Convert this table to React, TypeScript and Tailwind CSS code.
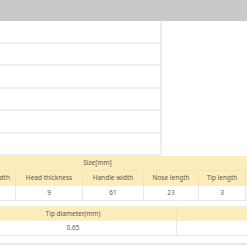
import React from 'react';

const sizeCols = [
  { label: 'Head width', value: '', w: 'w-[46px]' },
  { label: 'Head thickness', value: '9', w: 'w-[67px]' },
  { label: 'Handle width', value: '61', w: 'w-[61px]' },
  { label: 'Nose length', value: '23', w: 'w-[55px]' },
  { label: 'Tip length', value: '3', w: 'w-[47px]' },
];

const App: React.FC = () => {
  return (
    <div className="w-[247px] h-[247px] overflow-hidden bg-white text-[#5a5a5a] font-['Noto_Sans',sans-serif] text-[6.5px] leading-none">
      {/* top bar */}
      <div className="h-[21px] bg-[#c9c9c9]" />

      {/* form rows */}
      <div className="flex h-[135px]">
        <div className="w-[162px] border-r-2 border-b-2 border-[#ededed] rounded-br-[3px] flex flex-col">
          {[0, 1, 2, 3, 4, 5].map((i) => (
            <div key={i} className="flex-1 border-b-2 border-[#efefef] last:border-b-0" />
          ))}
        </div>
        <div className="flex-1" />
      </div>

      {/* size table */}
      <div className="overflow-hidden">
        <div className="ml-[-30px] w-[277px]">
          <div className="h-[15px] bg-[#fdedbb] flex items-center justify-center pr-[22px] border-b border-[#f3e6c2]">
            Size[mm]
          </div>
          <div className="flex h-[15px] bg-[#fdedbb]">
            {sizeCols.map((c) => (
              <div key={c.label} className={`${c.w} flex items-center justify-center border-r border-[#efe4c6] whitespace-nowrap`}>
                {c.label}
              </div>
            ))}
          </div>
          <div className="flex h-[15px] border-b border-[#e8e8e8]">
            {sizeCols.map((c) => (
              <div key={c.label} className={`${c.w} flex items-center justify-center border-r border-[#e8e8e8]`}>
                {c.value}
              </div>
            ))}
          </div>
        </div>
      </div>

      <div className="h-[6px] border-b border-[#efefef]" />

      {/* tip table */}
      <div className="overflow-hidden">
        <div className="ml-[-30px] w-[277px]">
          <div className="flex h-[14px] bg-[#fdedbb]">
            <div className="w-[207px] flex items-center justify-center border-r border-[#efe4c6]">Tip diameter(mm)</div>
            <div className="flex-1" />
          </div>
          <div className="flex h-[15px] border-b border-[#e8e8e8]">
            <div className="w-[207px] flex items-center justify-center border-r border-[#e8e8e8]">0.65</div>
            <div className="flex-1" />
          </div>
        </div>
      </div>

      <div className="h-[9px] border-b-2 border-[#e6e6e6]" />
    </div>
  );
};

export default App;
